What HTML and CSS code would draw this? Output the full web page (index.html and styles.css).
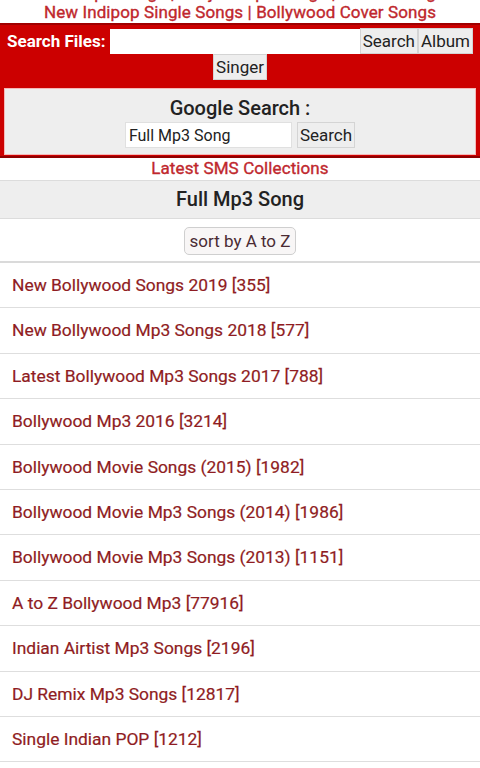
FILE: index.html
```html
<!DOCTYPE html>
<html lang="en">
<head>
<meta charset="UTF-8" />
<meta name="viewport" content="width=device-width, initial-scale=1" />
<title>Full Mp3 Song</title>
<link rel="stylesheet" href="styles.css">
</head>
<body>
  <div class="links prev">
    <a href="#">Hindi Mp3 Songs</a> | <a href="#">Punjabi Mp3 Songs</a> | <a href="#">Ghazal Songs</a>
  </div>
  <div class="links">
    <a href="#">New Indipop Single Songs</a> | <a href="#">Bollywood Cover Songs</a>
  </div>

  <form class="search-box" onsubmit="return false">
    <div class="search-row">
      <label for="q">Search Files:</label>
      <input type="text" id="q" class="search-input" autocomplete="off" />
      <button class="btn">Search</button><button class="btn">Album</button>
    </div>
    <div class="search-row center">
      <button class="btn">Singer</button>
    </div>
    <div class="google">
      <div class="google-title">Google Search :</div>
      <div class="google-row">
        <input type="text" class="google-input" value="Full Mp3 Song" />
        <button class="btn">Search</button>
      </div>
    </div>
  </form>

  <div class="links sms"><a href="#">Latest SMS Collections</a></div>

  <h1 class="heading">Full Mp3 Song</h1>

  <div class="sort">
    <a href="#" class="sort-btn">sort by A to Z</a>
  </div>

  <ul class="list">
    <li><a href="#">New Bollywood Songs 2019 [355]</a></li>
    <li><a href="#">New Bollywood Mp3 Songs 2018 [577]</a></li>
    <li><a href="#">Latest Bollywood Mp3 Songs 2017 [788]</a></li>
    <li><a href="#">Bollywood Mp3 2016 [3214]</a></li>
    <li><a href="#">Bollywood Movie Songs (2015) [1982]</a></li>
    <li><a href="#">Bollywood Movie Mp3 Songs (2014) [1986]</a></li>
    <li><a href="#">Bollywood Movie Mp3 Songs (2013) [1151]</a></li>
    <li><a href="#">A to Z Bollywood Mp3 [77916]</a></li>
    <li><a href="#">Indian Airtist Mp3 Songs [2196]</a></li>
    <li><a href="#">DJ Remix Mp3 Songs [12817]</a></li>
    <li><a href="#">Single Indian POP [1212]</a></li>
  </ul>
</body>
</html>
```

FILE: styles.css
```css
body {
  margin: 0;
  font-family: Roboto, "Liberation Sans", Arial, sans-serif;
  background: #fff;
  color: #222;
  overflow: hidden;
}

a {
  text-decoration: none;
}

.links {
  text-align: center;
  font-size: 17px;
  letter-spacing: 0.1px;
  line-height: 20px;
  color: #c0272d;
  -webkit-text-stroke: 0.35px #c0272d;
}

.links a {
  color: #c0272d;
}

.links.prev {
  margin-top: -16px;
  line-height: 18px;
}

.search-box {
  background-color: #cc0000;
  border-top: 2px solid #a00000;
  border-bottom: 2px solid #8e0000;
  margin: 1px 0 0;
  padding: 3px 4px 1px;
}

.search-row {
  display: flex;
  align-items: center;
}

.search-row.center {
  justify-content: center;
}

.search-row:first-child {
  padding-right: 3px;
}

.search-row label {
  color: #fff;
  font-size: 17px;
  font-weight: bold;
  padding: 0 5px 0 3px;
}

.search-input {
  flex: 1;
  height: 25px;
  border: none;
  padding: 0 4px;
  box-sizing: border-box;
  font-size: 16px;
  min-width: 0;
}

.btn {
  font-family: inherit;
  font-size: 17px;
  color: #222;
  background-color: #eeeeee;
  border: 1px solid #d4d4d4;
  height: 26px;
  padding: 0 2px;
  margin: 0;
}

.google {
  background-color: #eeeeee;
  border: 1px solid #f4b8b8;
  margin-top: 8px;
  padding: 7px 0 6px;
  text-align: center;
}

.google-title {
  font-size: 20px;
  font-weight: 500;
  line-height: 24px;
  color: #222;
  margin-bottom: 2px;
}

.google-row {
  display: flex;
  justify-content: center;
  gap: 5px;
}

.google-input {
  width: 167px;
  height: 26px;
  box-sizing: border-box;
  border: 1px solid #e0e0e0;
  padding: 0 3px;
  font-family: inherit;
  font-size: 16px;
  color: #222;
  background: #fff;
}

.sms {
  font-size: 17px;
  line-height: 20px;
}

.heading {
  margin: 2px 0 0;
  background-color: #eeeeee;
  border-top: 1px solid #dcdcdc;
  border-bottom: 1px solid #dcdcdc;
  text-align: center;
  font-size: 20px;
  font-weight: 500;
  line-height: 37px;
  color: #222;
}

.sort {
  text-align: center;
  padding: 8px 0 6px;
  border-bottom: 2px solid #dadada;
}

.sort-btn {
  display: inline-block;
  font-size: 17px;
  line-height: 26px;
  padding: 0 5px;
  color: #4a2b33;
  background-color: #f8f6f6;
  border: 1px solid #cfcfcf;
  border-radius: 5px;
}

.list {
  list-style: none;
  margin: 0;
  padding: 0;
}

.list li {
  padding: 12px;
  font-size: 17.4px;
  line-height: 20.4px;
  border-bottom: 1px solid #dedede;
}

.list a {
  color: #8f1c22;
  -webkit-text-stroke: 0.2px #8f1c22;
}
```
